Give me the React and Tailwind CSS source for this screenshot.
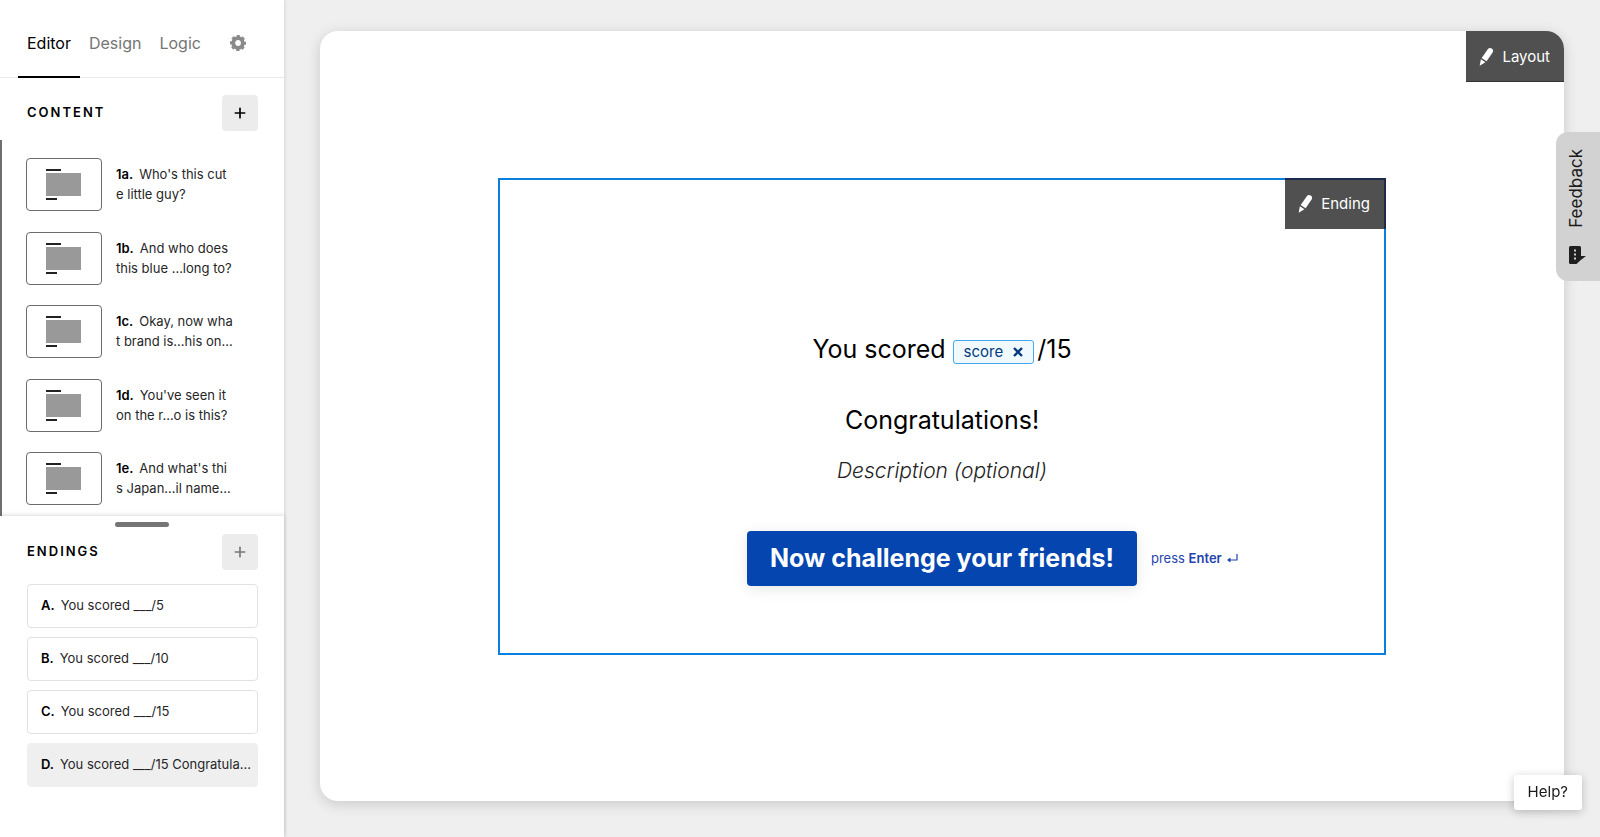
import { useState } from "react";
import { Plus } from "lucide-react";

const TABS = ["Editor", "Design", "Logic"];

const QUESTIONS = [
  { id: "1a", lines: ["Who's this cut", "e little guy?"] },
  { id: "1b", lines: ["And who does", "this blue ...long to?"] },
  { id: "1c", lines: ["Okay, now wha", "t brand is...his on..."] },
  { id: "1d", lines: ["You've seen it", "on the r...o is this?"] },
  { id: "1e", lines: ["And what's thi", "s Japan...il name..."] },
];

const ENDINGS = [
  { id: "A", label: "You scored ___/5" },
  { id: "B", label: "You scored ___/10" },
  { id: "C", label: "You scored ___/15" },
  { id: "D", label: "You scored ___/15 Congratula..." },
];

const GearIcon = () => (
  <svg viewBox="0 0 16 16" className="size-4" aria-hidden="true">
    <circle cx="8" cy="8" r="4.8" fill="none" stroke="#8a8a8a" strokeWidth="3.8" />
    <circle cx="8" cy="8" r="7" fill="none" stroke="#8a8a8a" strokeWidth="2" strokeDasharray="3.3 2.2" strokeDashoffset="1.6" />
  </svg>
);

const PencilIcon = () => (
  <svg viewBox="0 0 16 20" className="h-5 w-4" fill="#fff" aria-hidden="true">
    <path d="M8.800 2.200C9.800.8 11.300.6 12.700 1.500c1.500 1 1.800 2.400.9 3.900L7.600 14.300 2.700 11.100Z" />
    <path d="M1.900 12.300 6.400 15.300.7 18.800Z" />
  </svg>
);

const FeedbackIcon = () => (
  <svg viewBox="0 0 17 18" className="h-[18px] w-[17px]" aria-hidden="true">
    <path d="M1.500 0h9a1.500 1.500 0 0 1 1.500 1.500V10h5l-5.500 4.200L7.500 18h-6A1.500 1.500 0 0 1 0 16.500v-15A1.500 1.500 0 0 1 1.500 0Z" fill="#1f1f1f" />
    <path d="M5 3.500h2v2H5zM5 7.500h2v2H5zM5 11.500h2v2H5z" fill="#d2d2d2" />
  </svg>
);

const EnterIcon = () => (
  <svg viewBox="0 0 12 10" className="h-[10px] w-3" fill="none" stroke="#1f44ab" strokeWidth="1.2" aria-hidden="true">
    <path d="M11 0v6H2" />
    <path d="M4.500 3.500 1 6l3.500 2.500Z" fill="#1f44ab" stroke="none" />
  </svg>
);

const Thumbnail = () => (
  <span className="flex h-[53px] w-[76px] shrink-0 items-center rounded border border-[#6b6b6b] pl-[19px]">
    <span className="flex flex-col gap-0.5">
      <span className="h-0.5 w-[15px] bg-[#222]" />
      <span className="h-[23px] w-[35px] bg-[#999]" />
      <span className="h-0.5 w-[11px] bg-[#222]" />
    </span>
  </span>
);

const SectionHeader = ({ title, muted = false }) => (
  <div className="flex items-center justify-between pr-[26px] pl-[27px]">
    <h2 className="text-[13px] font-semibold tracking-[2px] text-black">{title}</h2>
    <button
      type="button"
      aria-label={`Add to ${title.toLowerCase()}`}
      className={`flex size-9 items-center justify-center rounded bg-[#ececec] ${muted ? "text-[#777]" : "text-black"}`}
    >
      <Plus className="size-4" strokeWidth={2.5} />
    </button>
  </div>
);

// Dark edit tag pinned to the top right corner of a block
const EditTag = ({ label, className = "" }) => (
  <button
    type="button"
    className={`absolute flex h-[51px] items-center gap-[7px] bg-[#505050] pr-3.5 pl-[13px] text-[15px] text-white ${className}`}
  >
    <PencilIcon />
    {label}
  </button>
);

const Sidebar = () => {
  const [tab, setTab] = useState("Editor");
  const [ending, setEnding] = useState("D");

  return (
    <aside className="z-10 flex w-[284px] shrink-0 flex-col bg-white shadow-[0_0_4px_rgba(0,0,0,0.15)]">
      {/* Tabs */}
      <nav className="flex h-[78px] shrink-0 border-b border-[#e8e8e8] pl-[18px] text-[16px]">
        {TABS.map((name) => (
          <button
            key={name}
            type="button"
            onClick={() => setTab(name)}
            className={`-mb-px border-b-2 px-[9px] pt-2.5 ${
              tab === name ? "border-black text-black" : "border-transparent text-[#757575]"
            }`}
          >
            {name}
          </button>
        ))}
        <button type="button" aria-label="Settings" className="ml-5 pt-2">
          <GearIcon />
        </button>
      </nav>

      {/* Questions */}
      <section className="flex min-h-0 flex-1 flex-col pt-[17px]">
        <SectionHeader title="CONTENT" />
        <ul className="mt-[9px] flex min-h-0 flex-1 flex-col justify-between overflow-hidden border-l-2 border-[#6c7075] pt-[18px] pb-[11px] pl-6">
          {QUESTIONS.map(({ id, lines }) => (
            <li key={id}>
              <button type="button" className="flex gap-3.5 text-left text-[13px] leading-5 text-[#262627]">
                <Thumbnail />
                <span className="pt-1.5 whitespace-nowrap">
                  <b className="mr-1.5 font-semibold text-black">{id}.</b>
                  {lines[0]}
                  <br />
                  {lines[1]}
                </span>
              </button>
            </li>
          ))}
        </ul>
      </section>

      {/* Endings */}
      <section className="flex flex-col pb-[50px] shadow-[0_-1px_4px_rgba(0,0,0,0.15)]">
        <div className="mt-1.5 mb-[7px] h-[5px] w-[54px] self-center rounded-full bg-[#757575]" />
        <SectionHeader title="ENDINGS" muted />
        <ul className="mt-3.5 flex flex-col gap-[9px] pr-[26px] pl-[27px]">
          {ENDINGS.map(({ id, label }) => (
            <li key={id}>
              <button
                type="button"
                onClick={() => setEnding(id)}
                className={`flex h-11 w-full items-center rounded border pl-[13px] text-[13px] whitespace-nowrap text-[#262627] ${
                  ending === id ? "border-[#efefef] bg-[#efefef]" : "border-[#e2e2e2] bg-white"
                }`}
              >
                <b className="mr-1.5 font-semibold text-black">{id}.</b>
                {label}
              </button>
            </li>
          ))}
        </ul>
      </section>
    </aside>
  );
};

const EndingBlock = () => (
  <section className="relative flex w-[888px] max-w-full flex-col items-center border-2 border-[#0a7fe0] pt-[151px] pb-[67px] text-black">
    <EditTag label="Ending" className="-top-0.5 -right-0.5 border-t-2 border-r-2 border-[#1c2a4c]" />
    <h1 className="flex h-9 items-center text-[25px] leading-9">
      You scored
      <span className="mt-1.5 mr-[3px] ml-[7px] flex h-6 items-center gap-2.5 rounded-[3px] border border-[#48a8ee] bg-[#f0f9fe] px-2.5 text-[15px] text-[#043a7c]">
        score
        <button type="button" aria-label="Remove score">
          <svg viewBox="0 0 10 10" className="size-2.5" stroke="currentColor" strokeWidth="2.4" aria-hidden="true">
            <path d="M1 1l8 8M9 1L1 9" />
          </svg>
        </button>
      </span>
      /15
    </h1>
    <p className="mt-[35px] text-[25px] leading-9">Congratulations!</p>
    <p className="mt-[17px] text-[21px] leading-8 font-light text-[#222] italic">Description (optional)</p>
    <div className="mt-11 grid w-full grid-cols-[1fr_auto_1fr] items-center gap-3.5">
      <button
        type="button"
        className="col-start-2 h-[55px] rounded bg-[#0445af] px-[23px] pt-0.5 text-[25px] font-bold text-white shadow-[0_3px_14px_rgba(0,0,0,0.1)]"
      >
        Now challenge your friends!
      </button>
      <p className="flex items-center pt-0.5 text-[13px] whitespace-nowrap text-[#1f44ab]">
        press&nbsp;<b className="mr-1 font-semibold">Enter</b>
        <EnterIcon />
      </p>
    </div>
  </section>
);

const App = () => {
  return (
    <div className="flex h-screen min-h-[760px] overflow-hidden bg-[#efefef] font-['Inter','Liberation_Sans',sans-serif]">
      <Sidebar />
      <main className="flex min-w-0 flex-1 px-9 pt-[31px] pb-9">
        <div className="relative flex flex-1 items-center justify-center rounded-[18px] bg-white shadow-[0_3px_14px_rgba(0,0,0,0.16)]">
          <EditTag label="Layout" className="top-0 right-0 rounded-tr-[18px] border-b border-[#333] pt-0.5" />
          <EndingBlock />
        </div>
      </main>

      {/* Floating helpers */}
      <button
        type="button"
        className="fixed top-[132px] right-0 flex h-[149px] w-11 flex-col items-center justify-between rounded-l-xl bg-[#d2d2d2] py-[17px] pr-0.5 text-[17px] text-[#1a1a1a]"
      >
        <span className="rotate-180 [writing-mode:vertical-rl]">Feedback</span>
        <FeedbackIcon />
      </button>
      <button
        type="button"
        className="fixed right-[18px] bottom-[27px] h-[35px] rounded-[3px] bg-white px-3.5 text-[15px] text-[#1a1a1a] shadow-[0_2px_10px_rgba(0,0,0,0.22)]"
      >
        Help?
      </button>
    </div>
  );
};

export default App;
